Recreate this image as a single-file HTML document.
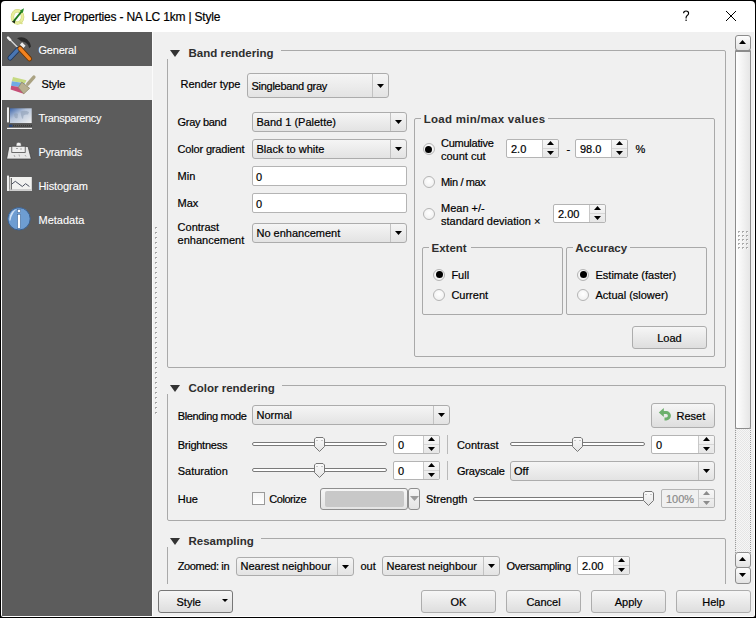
<!DOCTYPE html><html><head><meta charset="utf-8"><style>
html,body{margin:0;padding:0;}
body{width:756px;height:618px;overflow:hidden;background:#000;position:relative;font-family:"Liberation Sans",sans-serif;}
.t{position:absolute;white-space:nowrap;font-size:11px;line-height:13px;color:#000;-webkit-text-stroke:0.2px currentColor;}
</style></head><body>
<div style="position:absolute;left:1px;top:1px;width:754px;height:616px;box-sizing:border-box;background:#fff;border-radius:4px 4px 2px 2px;"></div>
<div style="position:absolute;left:152px;top:32px;width:602px;height:584px;box-sizing:border-box;background:#f0f0f0;"></div>
<div style="position:absolute;left:152px;top:32px;width:1px;height:584px;box-sizing:border-box;background:#fbfbfb;"></div>
<div style="position:absolute;left:2px;top:32px;width:150px;height:584px;box-sizing:border-box;background:#5c5c5c;"></div>
<div style="position:absolute;left:2px;top:66px;width:150px;height:34px;box-sizing:border-box;background:#f0f0f0;"></div>
<div class="t" style="left:31.5px;top:11px;font-size:12px;letter-spacing:-0.2px;">Layer Properties - NA LC 1km | Style</div>
<svg style="position:absolute;left:682px;top:10px" width="9" height="12" viewBox="0 0 9 12"><path d="M1.6 3.2 Q1.6 1 4 1 Q6.6 1 6.6 3.2 Q6.6 4.6 5.2 5.5 Q4.1 6.3 4.1 7.6 V8.4" stroke="#000" stroke-width="1.15" fill="none"/><rect x="3.45" y="9.6" width="1.3" height="1.3" fill="#000"/></svg>
<svg style="position:absolute;left:725px;top:10px" width="12" height="12"><path d="M1 1 L11 11 M11 1 L1 11" stroke="#000" stroke-width="1"/></svg>
<div class="t" style="left:38.5px;top:44px;font-size:11px;color:#ffffff;letter-spacing:-0.2px;-webkit-text-stroke:0.1px #fff;">General</div>
<div class="t" style="left:41.4px;top:78px;font-size:11px;letter-spacing:-0.1px;">Style</div>
<div class="t" style="left:38.5px;top:112px;font-size:11px;color:#ffffff;letter-spacing:-0.35px;-webkit-text-stroke:0.1px #fff;">Transparency</div>
<div class="t" style="left:38.5px;top:146px;font-size:11px;color:#ffffff;letter-spacing:-0.3px;-webkit-text-stroke:0.1px #fff;">Pyramids</div>
<div class="t" style="left:38.5px;top:180px;font-size:11px;color:#ffffff;letter-spacing:-0.1px;-webkit-text-stroke:0.1px #fff;">Histogram</div>
<div class="t" style="left:38.5px;top:214px;font-size:11px;color:#ffffff;-webkit-text-stroke:0.1px #fff;">Metadata</div>
<div style="position:absolute;left:155px;top:227px;width:2px;height:1px;box-sizing:border-box;background:#a0a0a0;"></div>
<div style="position:absolute;left:155px;top:228px;width:1px;height:1px;box-sizing:border-box;background:#b8b8b8;"></div>
<div style="position:absolute;left:156px;top:228px;width:1px;height:1px;box-sizing:border-box;background:#ffffff;"></div>
<div style="position:absolute;left:155px;top:232px;width:2px;height:1px;box-sizing:border-box;background:#a0a0a0;"></div>
<div style="position:absolute;left:155px;top:233px;width:1px;height:1px;box-sizing:border-box;background:#b8b8b8;"></div>
<div style="position:absolute;left:156px;top:233px;width:1px;height:1px;box-sizing:border-box;background:#ffffff;"></div>
<div style="position:absolute;left:155px;top:237px;width:2px;height:1px;box-sizing:border-box;background:#a0a0a0;"></div>
<div style="position:absolute;left:155px;top:238px;width:1px;height:1px;box-sizing:border-box;background:#b8b8b8;"></div>
<div style="position:absolute;left:156px;top:238px;width:1px;height:1px;box-sizing:border-box;background:#ffffff;"></div>
<div style="position:absolute;left:155px;top:242px;width:2px;height:1px;box-sizing:border-box;background:#a0a0a0;"></div>
<div style="position:absolute;left:155px;top:243px;width:1px;height:1px;box-sizing:border-box;background:#b8b8b8;"></div>
<div style="position:absolute;left:156px;top:243px;width:1px;height:1px;box-sizing:border-box;background:#ffffff;"></div>
<div style="position:absolute;left:155px;top:247px;width:2px;height:1px;box-sizing:border-box;background:#a0a0a0;"></div>
<div style="position:absolute;left:155px;top:248px;width:1px;height:1px;box-sizing:border-box;background:#b8b8b8;"></div>
<div style="position:absolute;left:156px;top:248px;width:1px;height:1px;box-sizing:border-box;background:#ffffff;"></div>
<div style="position:absolute;left:155px;top:252px;width:2px;height:1px;box-sizing:border-box;background:#a0a0a0;"></div>
<div style="position:absolute;left:155px;top:253px;width:1px;height:1px;box-sizing:border-box;background:#b8b8b8;"></div>
<div style="position:absolute;left:156px;top:253px;width:1px;height:1px;box-sizing:border-box;background:#ffffff;"></div>
<div style="position:absolute;left:155px;top:257px;width:2px;height:1px;box-sizing:border-box;background:#a0a0a0;"></div>
<div style="position:absolute;left:155px;top:258px;width:1px;height:1px;box-sizing:border-box;background:#b8b8b8;"></div>
<div style="position:absolute;left:156px;top:258px;width:1px;height:1px;box-sizing:border-box;background:#ffffff;"></div>
<div style="position:absolute;left:155px;top:262px;width:2px;height:1px;box-sizing:border-box;background:#a0a0a0;"></div>
<div style="position:absolute;left:155px;top:263px;width:1px;height:1px;box-sizing:border-box;background:#b8b8b8;"></div>
<div style="position:absolute;left:156px;top:263px;width:1px;height:1px;box-sizing:border-box;background:#ffffff;"></div>
<div style="position:absolute;left:155px;top:267px;width:2px;height:1px;box-sizing:border-box;background:#a0a0a0;"></div>
<div style="position:absolute;left:155px;top:268px;width:1px;height:1px;box-sizing:border-box;background:#b8b8b8;"></div>
<div style="position:absolute;left:156px;top:268px;width:1px;height:1px;box-sizing:border-box;background:#ffffff;"></div>
<div style="position:absolute;left:155px;top:272px;width:2px;height:1px;box-sizing:border-box;background:#a0a0a0;"></div>
<div style="position:absolute;left:155px;top:273px;width:1px;height:1px;box-sizing:border-box;background:#b8b8b8;"></div>
<div style="position:absolute;left:156px;top:273px;width:1px;height:1px;box-sizing:border-box;background:#ffffff;"></div>
<div style="position:absolute;left:155px;top:277px;width:2px;height:1px;box-sizing:border-box;background:#a0a0a0;"></div>
<div style="position:absolute;left:155px;top:278px;width:1px;height:1px;box-sizing:border-box;background:#b8b8b8;"></div>
<div style="position:absolute;left:156px;top:278px;width:1px;height:1px;box-sizing:border-box;background:#ffffff;"></div>
<div style="position:absolute;left:155px;top:282px;width:2px;height:1px;box-sizing:border-box;background:#a0a0a0;"></div>
<div style="position:absolute;left:155px;top:283px;width:1px;height:1px;box-sizing:border-box;background:#b8b8b8;"></div>
<div style="position:absolute;left:156px;top:283px;width:1px;height:1px;box-sizing:border-box;background:#ffffff;"></div>
<div style="position:absolute;left:155px;top:287px;width:2px;height:1px;box-sizing:border-box;background:#a0a0a0;"></div>
<div style="position:absolute;left:155px;top:288px;width:1px;height:1px;box-sizing:border-box;background:#b8b8b8;"></div>
<div style="position:absolute;left:156px;top:288px;width:1px;height:1px;box-sizing:border-box;background:#ffffff;"></div>
<div style="position:absolute;left:155px;top:292px;width:2px;height:1px;box-sizing:border-box;background:#a0a0a0;"></div>
<div style="position:absolute;left:155px;top:293px;width:1px;height:1px;box-sizing:border-box;background:#b8b8b8;"></div>
<div style="position:absolute;left:156px;top:293px;width:1px;height:1px;box-sizing:border-box;background:#ffffff;"></div>
<div style="position:absolute;left:155px;top:297px;width:2px;height:1px;box-sizing:border-box;background:#a0a0a0;"></div>
<div style="position:absolute;left:155px;top:298px;width:1px;height:1px;box-sizing:border-box;background:#b8b8b8;"></div>
<div style="position:absolute;left:156px;top:298px;width:1px;height:1px;box-sizing:border-box;background:#ffffff;"></div>
<div style="position:absolute;left:155px;top:302px;width:2px;height:1px;box-sizing:border-box;background:#a0a0a0;"></div>
<div style="position:absolute;left:155px;top:303px;width:1px;height:1px;box-sizing:border-box;background:#b8b8b8;"></div>
<div style="position:absolute;left:156px;top:303px;width:1px;height:1px;box-sizing:border-box;background:#ffffff;"></div>
<div style="position:absolute;left:155px;top:307px;width:2px;height:1px;box-sizing:border-box;background:#a0a0a0;"></div>
<div style="position:absolute;left:155px;top:308px;width:1px;height:1px;box-sizing:border-box;background:#b8b8b8;"></div>
<div style="position:absolute;left:156px;top:308px;width:1px;height:1px;box-sizing:border-box;background:#ffffff;"></div>
<div style="position:absolute;left:155px;top:312px;width:2px;height:1px;box-sizing:border-box;background:#a0a0a0;"></div>
<div style="position:absolute;left:155px;top:313px;width:1px;height:1px;box-sizing:border-box;background:#b8b8b8;"></div>
<div style="position:absolute;left:156px;top:313px;width:1px;height:1px;box-sizing:border-box;background:#ffffff;"></div>
<div style="position:absolute;left:155px;top:317px;width:2px;height:1px;box-sizing:border-box;background:#a0a0a0;"></div>
<div style="position:absolute;left:155px;top:318px;width:1px;height:1px;box-sizing:border-box;background:#b8b8b8;"></div>
<div style="position:absolute;left:156px;top:318px;width:1px;height:1px;box-sizing:border-box;background:#ffffff;"></div>
<div style="position:absolute;left:155px;top:322px;width:2px;height:1px;box-sizing:border-box;background:#a0a0a0;"></div>
<div style="position:absolute;left:155px;top:323px;width:1px;height:1px;box-sizing:border-box;background:#b8b8b8;"></div>
<div style="position:absolute;left:156px;top:323px;width:1px;height:1px;box-sizing:border-box;background:#ffffff;"></div>
<div style="position:absolute;left:155px;top:327px;width:2px;height:1px;box-sizing:border-box;background:#a0a0a0;"></div>
<div style="position:absolute;left:155px;top:328px;width:1px;height:1px;box-sizing:border-box;background:#b8b8b8;"></div>
<div style="position:absolute;left:156px;top:328px;width:1px;height:1px;box-sizing:border-box;background:#ffffff;"></div>
<div style="position:absolute;left:155px;top:332px;width:2px;height:1px;box-sizing:border-box;background:#a0a0a0;"></div>
<div style="position:absolute;left:155px;top:333px;width:1px;height:1px;box-sizing:border-box;background:#b8b8b8;"></div>
<div style="position:absolute;left:156px;top:333px;width:1px;height:1px;box-sizing:border-box;background:#ffffff;"></div>
<div style="position:absolute;left:155px;top:337px;width:2px;height:1px;box-sizing:border-box;background:#a0a0a0;"></div>
<div style="position:absolute;left:155px;top:338px;width:1px;height:1px;box-sizing:border-box;background:#b8b8b8;"></div>
<div style="position:absolute;left:156px;top:338px;width:1px;height:1px;box-sizing:border-box;background:#ffffff;"></div>
<div style="position:absolute;left:155px;top:342px;width:2px;height:1px;box-sizing:border-box;background:#a0a0a0;"></div>
<div style="position:absolute;left:155px;top:343px;width:1px;height:1px;box-sizing:border-box;background:#b8b8b8;"></div>
<div style="position:absolute;left:156px;top:343px;width:1px;height:1px;box-sizing:border-box;background:#ffffff;"></div>
<div style="position:absolute;left:155px;top:347px;width:2px;height:1px;box-sizing:border-box;background:#a0a0a0;"></div>
<div style="position:absolute;left:155px;top:348px;width:1px;height:1px;box-sizing:border-box;background:#b8b8b8;"></div>
<div style="position:absolute;left:156px;top:348px;width:1px;height:1px;box-sizing:border-box;background:#ffffff;"></div>
<div style="position:absolute;left:155px;top:352px;width:2px;height:1px;box-sizing:border-box;background:#a0a0a0;"></div>
<div style="position:absolute;left:155px;top:353px;width:1px;height:1px;box-sizing:border-box;background:#b8b8b8;"></div>
<div style="position:absolute;left:156px;top:353px;width:1px;height:1px;box-sizing:border-box;background:#ffffff;"></div>
<div style="position:absolute;left:155px;top:357px;width:2px;height:1px;box-sizing:border-box;background:#a0a0a0;"></div>
<div style="position:absolute;left:155px;top:358px;width:1px;height:1px;box-sizing:border-box;background:#b8b8b8;"></div>
<div style="position:absolute;left:156px;top:358px;width:1px;height:1px;box-sizing:border-box;background:#ffffff;"></div>
<div style="position:absolute;left:155px;top:362px;width:2px;height:1px;box-sizing:border-box;background:#a0a0a0;"></div>
<div style="position:absolute;left:155px;top:363px;width:1px;height:1px;box-sizing:border-box;background:#b8b8b8;"></div>
<div style="position:absolute;left:156px;top:363px;width:1px;height:1px;box-sizing:border-box;background:#ffffff;"></div>
<div style="position:absolute;left:155px;top:367px;width:2px;height:1px;box-sizing:border-box;background:#a0a0a0;"></div>
<div style="position:absolute;left:155px;top:368px;width:1px;height:1px;box-sizing:border-box;background:#b8b8b8;"></div>
<div style="position:absolute;left:156px;top:368px;width:1px;height:1px;box-sizing:border-box;background:#ffffff;"></div>
<div style="position:absolute;left:155px;top:372px;width:2px;height:1px;box-sizing:border-box;background:#a0a0a0;"></div>
<div style="position:absolute;left:155px;top:373px;width:1px;height:1px;box-sizing:border-box;background:#b8b8b8;"></div>
<div style="position:absolute;left:156px;top:373px;width:1px;height:1px;box-sizing:border-box;background:#ffffff;"></div>
<div style="position:absolute;left:155px;top:377px;width:2px;height:1px;box-sizing:border-box;background:#a0a0a0;"></div>
<div style="position:absolute;left:155px;top:378px;width:1px;height:1px;box-sizing:border-box;background:#b8b8b8;"></div>
<div style="position:absolute;left:156px;top:378px;width:1px;height:1px;box-sizing:border-box;background:#ffffff;"></div>
<div style="position:absolute;left:155px;top:382px;width:2px;height:1px;box-sizing:border-box;background:#a0a0a0;"></div>
<div style="position:absolute;left:155px;top:383px;width:1px;height:1px;box-sizing:border-box;background:#b8b8b8;"></div>
<div style="position:absolute;left:156px;top:383px;width:1px;height:1px;box-sizing:border-box;background:#ffffff;"></div>
<div style="position:absolute;left:155px;top:387px;width:2px;height:1px;box-sizing:border-box;background:#a0a0a0;"></div>
<div style="position:absolute;left:155px;top:388px;width:1px;height:1px;box-sizing:border-box;background:#b8b8b8;"></div>
<div style="position:absolute;left:156px;top:388px;width:1px;height:1px;box-sizing:border-box;background:#ffffff;"></div>
<div style="position:absolute;left:155px;top:392px;width:2px;height:1px;box-sizing:border-box;background:#a0a0a0;"></div>
<div style="position:absolute;left:155px;top:393px;width:1px;height:1px;box-sizing:border-box;background:#b8b8b8;"></div>
<div style="position:absolute;left:156px;top:393px;width:1px;height:1px;box-sizing:border-box;background:#ffffff;"></div>
<div style="position:absolute;left:155px;top:397px;width:2px;height:1px;box-sizing:border-box;background:#a0a0a0;"></div>
<div style="position:absolute;left:155px;top:398px;width:1px;height:1px;box-sizing:border-box;background:#b8b8b8;"></div>
<div style="position:absolute;left:156px;top:398px;width:1px;height:1px;box-sizing:border-box;background:#ffffff;"></div>
<div style="position:absolute;left:155px;top:402px;width:2px;height:1px;box-sizing:border-box;background:#a0a0a0;"></div>
<div style="position:absolute;left:155px;top:403px;width:1px;height:1px;box-sizing:border-box;background:#b8b8b8;"></div>
<div style="position:absolute;left:156px;top:403px;width:1px;height:1px;box-sizing:border-box;background:#ffffff;"></div>
<div style="position:absolute;left:155px;top:407px;width:2px;height:1px;box-sizing:border-box;background:#a0a0a0;"></div>
<div style="position:absolute;left:155px;top:408px;width:1px;height:1px;box-sizing:border-box;background:#b8b8b8;"></div>
<div style="position:absolute;left:156px;top:408px;width:1px;height:1px;box-sizing:border-box;background:#ffffff;"></div>
<div style="position:absolute;left:155px;top:412px;width:2px;height:1px;box-sizing:border-box;background:#a0a0a0;"></div>
<div style="position:absolute;left:155px;top:413px;width:1px;height:1px;box-sizing:border-box;background:#b8b8b8;"></div>
<div style="position:absolute;left:156px;top:413px;width:1px;height:1px;box-sizing:border-box;background:#ffffff;"></div>
<div style="position:absolute;left:167px;top:50px;width:559px;height:318px;box-sizing:border-box;border:1px solid #a9a9a9;border-radius:2px;"></div><div style="position:absolute;left:166px;top:49px;width:115px;height:10px;box-sizing:border-box;background:#f0f0f0;"></div><div style="position:absolute;left:170px;top:50px;width:0;height:0;border-left:5px solid transparent;border-right:5px solid transparent;border-top:7px solid #333;"></div><div class="t" style="left:188.5px;top:47px;font-size:11.5px;font-weight:700;-webkit-text-stroke:0;color:#2e2e2e;">Band rendering</div>
<div class="t" style="left:180.5px;top:78px;font-size:11px;">Render type</div>
<div style="position:absolute;left:247px;top:73px;width:142px;height:25px;box-sizing:border-box;border:1px solid #acacac;border-radius:3px;background:linear-gradient(#f5f5f5,#e3e3e3);"></div><div style="position:absolute;left:372px;top:74px;width:1px;height:23px;box-sizing:border-box;background:#c2c2c2;"></div><svg style="position:absolute;left:377px;top:84px" width="7" height="4"><path d="M0 0 H7 L3.5 4 Z" fill="#000"/></svg>
<div class="t" style="left:251.5px;top:80px;font-size:11px;letter-spacing:-0.27px;">Singleband gray</div>
<div class="t" style="left:177.6px;top:116px;font-size:11px;letter-spacing:-0.3px;">Gray band</div>
<div style="position:absolute;left:252px;top:112px;width:155px;height:20px;box-sizing:border-box;border:1px solid #acacac;border-radius:3px;background:linear-gradient(#f5f5f5,#e3e3e3);"></div><div style="position:absolute;left:390px;top:113px;width:1px;height:18px;box-sizing:border-box;background:#c2c2c2;"></div><svg style="position:absolute;left:395px;top:120px" width="7" height="4"><path d="M0 0 H7 L3.5 4 Z" fill="#000"/></svg><div class="t" style="left:256.5px;top:116px;font-size:11px;">Band 1 (Palette)</div>
<div class="t" style="left:177.6px;top:143px;font-size:11px;letter-spacing:-0.17px;">Color gradient</div>
<div style="position:absolute;left:252px;top:139px;width:155px;height:20px;box-sizing:border-box;border:1px solid #acacac;border-radius:3px;background:linear-gradient(#f5f5f5,#e3e3e3);"></div><div style="position:absolute;left:390px;top:140px;width:1px;height:18px;box-sizing:border-box;background:#c2c2c2;"></div><svg style="position:absolute;left:395px;top:147px" width="7" height="4"><path d="M0 0 H7 L3.5 4 Z" fill="#000"/></svg><div class="t" style="left:256.5px;top:143px;font-size:11px;">Black to white</div>
<div class="t" style="left:177.6px;top:170px;font-size:11px;">Min</div>
<div style="position:absolute;left:252px;top:166px;width:155px;height:20px;box-sizing:border-box;border:1px solid #b4b4b4;border-radius:2px;background:#fff;"></div><div class="t" style="left:256px;top:171px;font-size:11px;">0</div>
<div class="t" style="left:177.6px;top:197px;font-size:11px;">Max</div>
<div style="position:absolute;left:252px;top:193px;width:155px;height:20px;box-sizing:border-box;border:1px solid #b4b4b4;border-radius:2px;background:#fff;"></div><div class="t" style="left:256px;top:198px;font-size:11px;">0</div>
<div class="t" style="left:177.6px;top:221px;font-size:11px;">Contrast</div>
<div class="t" style="left:177.6px;top:234px;font-size:11px;">enhancement</div>
<div style="position:absolute;left:252px;top:223px;width:155px;height:20px;box-sizing:border-box;border:1px solid #acacac;border-radius:3px;background:linear-gradient(#f5f5f5,#e3e3e3);"></div><div style="position:absolute;left:390px;top:224px;width:1px;height:18px;box-sizing:border-box;background:#c2c2c2;"></div><svg style="position:absolute;left:395px;top:231px" width="7" height="4"><path d="M0 0 H7 L3.5 4 Z" fill="#000"/></svg><div class="t" style="left:256.5px;top:227px;font-size:11px;">No enhancement</div>
<div style="position:absolute;left:414px;top:118px;width:301px;height:239px;box-sizing:border-box;border:1px solid #a9a9a9;border-radius:2px;"></div><div style="position:absolute;left:421px;top:117px;width:127px;height:5px;box-sizing:border-box;background:#f0f0f0;"></div>
<div class="t" style="left:423.7px;top:113px;font-size:11.5px;font-weight:700;-webkit-text-stroke:0;color:#2e2e2e;letter-spacing:0.28px;">Load min/max values</div>
<div style="position:absolute;left:422.6px;top:143.3px;width:12px;height:12px;box-sizing:border-box;border:1px solid #b4b4b4;border-radius:50%;background:radial-gradient(circle at 50% 40%,#ffffff,#ececec);"></div><div style="position:absolute;left:425.1px;top:145.8px;width:7px;height:7px;border-radius:50%;background:#000;"></div>
<div class="t" style="left:441px;top:137px;font-size:11px;letter-spacing:-0.25px;">Cumulative</div>
<div class="t" style="left:441px;top:150px;font-size:11px;">count cut</div>
<div style="position:absolute;left:506px;top:139px;width:53px;height:19px;box-sizing:border-box;border:1px solid #b4b4b4;border-radius:2px;background:#fff;"></div><div style="position:absolute;left:542px;top:140px;width:16px;height:17px;box-sizing:border-box;background:linear-gradient(#f7f7f7,#e6e6e6);border-radius:0 2px 2px 0;"></div><div style="position:absolute;left:542px;top:140px;width:1px;height:17px;box-sizing:border-box;background:#c8c8c8;"></div><div style="position:absolute;left:543px;top:148px;width:15px;height:1px;box-sizing:border-box;background:#d6d6d6;"></div><svg style="position:absolute;left:547px;top:141px" width="7" height="4"><path d="M0 4 H7 L3.5 0 Z" fill="#000"/></svg><svg style="position:absolute;left:547px;top:151px" width="7" height="4"><path d="M0 0 H7 L3.5 4 Z" fill="#000"/></svg><div class="t" style="left:511px;top:143px;font-size:11px;">2.0</div>
<div class="t" style="left:566.5px;top:143px;font-size:11px;">-</div>
<div style="position:absolute;left:575px;top:139px;width:53px;height:19px;box-sizing:border-box;border:1px solid #b4b4b4;border-radius:2px;background:#fff;"></div><div style="position:absolute;left:611px;top:140px;width:16px;height:17px;box-sizing:border-box;background:linear-gradient(#f7f7f7,#e6e6e6);border-radius:0 2px 2px 0;"></div><div style="position:absolute;left:611px;top:140px;width:1px;height:17px;box-sizing:border-box;background:#c8c8c8;"></div><div style="position:absolute;left:612px;top:148px;width:15px;height:1px;box-sizing:border-box;background:#d6d6d6;"></div><svg style="position:absolute;left:616px;top:141px" width="7" height="4"><path d="M0 4 H7 L3.5 0 Z" fill="#000"/></svg><svg style="position:absolute;left:616px;top:151px" width="7" height="4"><path d="M0 0 H7 L3.5 4 Z" fill="#000"/></svg><div class="t" style="left:580px;top:143px;font-size:11px;">98.0</div>
<div class="t" style="left:635.5px;top:143px;font-size:11px;">%</div>
<div style="position:absolute;left:422.6px;top:175.5px;width:12px;height:12px;box-sizing:border-box;border:1px solid #b4b4b4;border-radius:50%;background:radial-gradient(circle at 50% 40%,#ffffff,#ececec);"></div>
<div class="t" style="left:441px;top:176px;font-size:11px;letter-spacing:-0.35px;">Min / max</div>
<div style="position:absolute;left:422.6px;top:208px;width:12px;height:12px;box-sizing:border-box;border:1px solid #b4b4b4;border-radius:50%;background:radial-gradient(circle at 50% 40%,#ffffff,#ececec);"></div>
<div class="t" style="left:441px;top:202px;font-size:11px;">Mean +/-</div>
<div class="t" style="left:441px;top:215px;font-size:11px;">standard deviation ×</div>
<div style="position:absolute;left:553px;top:204px;width:53px;height:19px;box-sizing:border-box;border:1px solid #b4b4b4;border-radius:2px;background:#fff;"></div><div style="position:absolute;left:589px;top:205px;width:16px;height:17px;box-sizing:border-box;background:linear-gradient(#f7f7f7,#e6e6e6);border-radius:0 2px 2px 0;"></div><div style="position:absolute;left:589px;top:205px;width:1px;height:17px;box-sizing:border-box;background:#c8c8c8;"></div><div style="position:absolute;left:590px;top:213px;width:15px;height:1px;box-sizing:border-box;background:#d6d6d6;"></div><svg style="position:absolute;left:594px;top:206px" width="7" height="4"><path d="M0 4 H7 L3.5 0 Z" fill="#000"/></svg><svg style="position:absolute;left:594px;top:216px" width="7" height="4"><path d="M0 0 H7 L3.5 4 Z" fill="#000"/></svg><div class="t" style="left:558px;top:208px;font-size:11px;">2.00</div>
<div style="position:absolute;left:422px;top:247px;width:141px;height:68px;box-sizing:border-box;border:1px solid #a9a9a9;border-radius:2px;"></div><div style="position:absolute;left:429px;top:246px;width:42px;height:5px;box-sizing:border-box;background:#f0f0f0;"></div>
<div class="t" style="left:431.5px;top:242px;font-size:11.5px;font-weight:700;-webkit-text-stroke:0;color:#2e2e2e;">Extent</div>
<div style="position:absolute;left:433.3px;top:268.8px;width:12px;height:12px;box-sizing:border-box;border:1px solid #b4b4b4;border-radius:50%;background:radial-gradient(circle at 50% 40%,#ffffff,#ececec);"></div><div style="position:absolute;left:435.8px;top:271.3px;width:7px;height:7px;border-radius:50%;background:#000;"></div>
<div class="t" style="left:451.4px;top:269px;font-size:11px;">Full</div>
<div style="position:absolute;left:433.3px;top:288.5px;width:12px;height:12px;box-sizing:border-box;border:1px solid #b4b4b4;border-radius:50%;background:radial-gradient(circle at 50% 40%,#ffffff,#ececec);"></div>
<div class="t" style="left:451.4px;top:289px;font-size:11px;">Current</div>
<div style="position:absolute;left:566px;top:247px;width:141px;height:68px;box-sizing:border-box;border:1px solid #a9a9a9;border-radius:2px;"></div><div style="position:absolute;left:573px;top:246px;width:57px;height:5px;box-sizing:border-box;background:#f0f0f0;"></div>
<div class="t" style="left:575.3px;top:242px;font-size:11.5px;font-weight:700;-webkit-text-stroke:0;color:#2e2e2e;">Accuracy</div>
<div style="position:absolute;left:577.2px;top:268.8px;width:12px;height:12px;box-sizing:border-box;border:1px solid #b4b4b4;border-radius:50%;background:radial-gradient(circle at 50% 40%,#ffffff,#ececec);"></div><div style="position:absolute;left:579.7px;top:271.3px;width:7px;height:7px;border-radius:50%;background:#000;"></div>
<div class="t" style="left:595.5px;top:269px;font-size:11px;">Estimate (faster)</div>
<div style="position:absolute;left:577.2px;top:288.5px;width:12px;height:12px;box-sizing:border-box;border:1px solid #b4b4b4;border-radius:50%;background:radial-gradient(circle at 50% 40%,#ffffff,#ececec);"></div>
<div class="t" style="left:595.5px;top:289px;font-size:11px;">Actual (slower)</div>
<div style="position:absolute;left:632px;top:326px;width:75px;height:23px;box-sizing:border-box;border:1px solid #adadad;border-radius:3px;background:linear-gradient(#f6f6f6,#dedede);"></div><div class="t" style="left:632px;width:75px;text-align:center;top:332px;">Load</div>
<div style="position:absolute;left:167px;top:385px;width:559px;height:136px;box-sizing:border-box;border:1px solid #a9a9a9;border-radius:2px;"></div><div style="position:absolute;left:166px;top:384px;width:116px;height:10px;box-sizing:border-box;background:#f0f0f0;"></div><div style="position:absolute;left:170px;top:385px;width:0;height:0;border-left:5px solid transparent;border-right:5px solid transparent;border-top:7px solid #333;"></div><div class="t" style="left:188.5px;top:382px;font-size:11.5px;font-weight:700;-webkit-text-stroke:0;color:#2e2e2e;">Color rendering</div>
<div class="t" style="left:177.7px;top:410px;font-size:11px;letter-spacing:-0.35px;">Blending mode</div>
<div style="position:absolute;left:252px;top:405px;width:198px;height:20px;box-sizing:border-box;border:1px solid #acacac;border-radius:3px;background:linear-gradient(#f5f5f5,#e3e3e3);"></div><div style="position:absolute;left:433px;top:406px;width:1px;height:18px;box-sizing:border-box;background:#c2c2c2;"></div><svg style="position:absolute;left:438px;top:413px" width="7" height="4"><path d="M0 0 H7 L3.5 4 Z" fill="#000"/></svg><div class="t" style="left:256.5px;top:409px;font-size:11px;">Normal</div>
<div style="position:absolute;left:651px;top:403px;width:64px;height:25px;box-sizing:border-box;border:1px solid #adadad;border-radius:3px;background:linear-gradient(#f6f6f6,#dedede);"></div>
<div class="t" style="left:676.5px;top:410px;font-size:11px;">Reset</div>
<div class="t" style="left:177.7px;top:439px;font-size:11px;letter-spacing:-0.25px;">Brightness</div>
<div style="position:absolute;left:252px;top:442px;width:135px;height:4px;box-sizing:border-box;border:1px solid #7a7a7a;border-radius:2px;background:#fff;"></div><svg style="position:absolute;left:314px;top:437px" width="11" height="15" viewBox="0 0 11 15"><defs><linearGradient id="hg" x1="0" y1="0" x2="0" y2="1"><stop offset="0" stop-color="#fbfbfb"/><stop offset="1" stop-color="#e4e4e4"/></linearGradient></defs><path d="M2 0.5 H9 L10.5 2 V9.5 L5.5 14.5 L0.5 9.5 V2 Z" fill="url(#hg)" stroke="#777" stroke-width="1"/><rect x="2.5" y="3" width="1" height="1" fill="#999"/><rect x="7.5" y="3" width="1" height="1" fill="#999"/></svg>
<div style="position:absolute;left:393px;top:435px;width:47px;height:19px;box-sizing:border-box;border:1px solid #b4b4b4;border-radius:2px;background:#fff;"></div><div style="position:absolute;left:423px;top:436px;width:16px;height:17px;box-sizing:border-box;background:linear-gradient(#f7f7f7,#e6e6e6);border-radius:0 2px 2px 0;"></div><div style="position:absolute;left:423px;top:436px;width:1px;height:17px;box-sizing:border-box;background:#c8c8c8;"></div><div style="position:absolute;left:424px;top:444px;width:15px;height:1px;box-sizing:border-box;background:#d6d6d6;"></div><svg style="position:absolute;left:428px;top:437px" width="7" height="4"><path d="M0 4 H7 L3.5 0 Z" fill="#000"/></svg><svg style="position:absolute;left:428px;top:447px" width="7" height="4"><path d="M0 0 H7 L3.5 4 Z" fill="#000"/></svg><div class="t" style="left:398px;top:439px;font-size:11px;">0</div>
<div style="position:absolute;left:447px;top:435px;width:1px;height:19px;box-sizing:border-box;background:#b9b9b9;"></div>
<div class="t" style="left:456.9px;top:439px;font-size:11px;">Contrast</div>
<div style="position:absolute;left:510px;top:442px;width:135px;height:4px;box-sizing:border-box;border:1px solid #7a7a7a;border-radius:2px;background:#fff;"></div><svg style="position:absolute;left:572px;top:437px" width="11" height="15" viewBox="0 0 11 15"><defs><linearGradient id="hg" x1="0" y1="0" x2="0" y2="1"><stop offset="0" stop-color="#fbfbfb"/><stop offset="1" stop-color="#e4e4e4"/></linearGradient></defs><path d="M2 0.5 H9 L10.5 2 V9.5 L5.5 14.5 L0.5 9.5 V2 Z" fill="url(#hg)" stroke="#777" stroke-width="1"/><rect x="2.5" y="3" width="1" height="1" fill="#999"/><rect x="7.5" y="3" width="1" height="1" fill="#999"/></svg>
<div style="position:absolute;left:651px;top:435px;width:64px;height:19px;box-sizing:border-box;border:1px solid #b4b4b4;border-radius:2px;background:#fff;"></div><div style="position:absolute;left:698px;top:436px;width:16px;height:17px;box-sizing:border-box;background:linear-gradient(#f7f7f7,#e6e6e6);border-radius:0 2px 2px 0;"></div><div style="position:absolute;left:698px;top:436px;width:1px;height:17px;box-sizing:border-box;background:#c8c8c8;"></div><div style="position:absolute;left:699px;top:444px;width:15px;height:1px;box-sizing:border-box;background:#d6d6d6;"></div><svg style="position:absolute;left:703px;top:437px" width="7" height="4"><path d="M0 4 H7 L3.5 0 Z" fill="#000"/></svg><svg style="position:absolute;left:703px;top:447px" width="7" height="4"><path d="M0 0 H7 L3.5 4 Z" fill="#000"/></svg><div class="t" style="left:656px;top:439px;font-size:11px;">0</div>
<div class="t" style="left:177.7px;top:465px;font-size:11px;">Saturation</div>
<div style="position:absolute;left:252px;top:468px;width:135px;height:4px;box-sizing:border-box;border:1px solid #7a7a7a;border-radius:2px;background:#fff;"></div><svg style="position:absolute;left:314px;top:463px" width="11" height="15" viewBox="0 0 11 15"><defs><linearGradient id="hg" x1="0" y1="0" x2="0" y2="1"><stop offset="0" stop-color="#fbfbfb"/><stop offset="1" stop-color="#e4e4e4"/></linearGradient></defs><path d="M2 0.5 H9 L10.5 2 V9.5 L5.5 14.5 L0.5 9.5 V2 Z" fill="url(#hg)" stroke="#777" stroke-width="1"/><rect x="2.5" y="3" width="1" height="1" fill="#999"/><rect x="7.5" y="3" width="1" height="1" fill="#999"/></svg>
<div style="position:absolute;left:393px;top:461px;width:47px;height:19px;box-sizing:border-box;border:1px solid #b4b4b4;border-radius:2px;background:#fff;"></div><div style="position:absolute;left:423px;top:462px;width:16px;height:17px;box-sizing:border-box;background:linear-gradient(#f7f7f7,#e6e6e6);border-radius:0 2px 2px 0;"></div><div style="position:absolute;left:423px;top:462px;width:1px;height:17px;box-sizing:border-box;background:#c8c8c8;"></div><div style="position:absolute;left:424px;top:470px;width:15px;height:1px;box-sizing:border-box;background:#d6d6d6;"></div><svg style="position:absolute;left:428px;top:463px" width="7" height="4"><path d="M0 4 H7 L3.5 0 Z" fill="#000"/></svg><svg style="position:absolute;left:428px;top:473px" width="7" height="4"><path d="M0 0 H7 L3.5 4 Z" fill="#000"/></svg><div class="t" style="left:398px;top:465px;font-size:11px;">0</div>
<div style="position:absolute;left:447px;top:461px;width:1px;height:19px;box-sizing:border-box;background:#b9b9b9;"></div>
<div class="t" style="left:456.9px;top:465px;font-size:11px;letter-spacing:-0.2px;">Grayscale</div>
<div style="position:absolute;left:510px;top:461px;width:205px;height:20px;box-sizing:border-box;border:1px solid #acacac;border-radius:3px;background:linear-gradient(#f5f5f5,#e3e3e3);"></div><div style="position:absolute;left:698px;top:462px;width:1px;height:18px;box-sizing:border-box;background:#c2c2c2;"></div><svg style="position:absolute;left:703px;top:469px" width="7" height="4"><path d="M0 0 H7 L3.5 4 Z" fill="#000"/></svg><div class="t" style="left:514px;top:465px;font-size:11px;">Off</div>
<div class="t" style="left:177.7px;top:493px;font-size:11px;">Hue</div>
<div style="position:absolute;left:252px;top:492px;width:13px;height:13px;box-sizing:border-box;border:1px solid #9a9a9a;background:linear-gradient(#f4f4f4,#ffffff);"></div>
<div class="t" style="left:269.3px;top:493px;font-size:11px;letter-spacing:-0.45px;">Colorize</div>
<div style="position:absolute;left:320px;top:488px;width:88px;height:22px;box-sizing:border-box;border:1px solid #8e8e8e;border-radius:3px;background:linear-gradient(#f6f6f6,#e4e4e4);"></div>
<div style="position:absolute;left:325px;top:491px;width:79px;height:16px;box-sizing:border-box;background:#c8c8c8;border-radius:2px;"></div>
<div style="position:absolute;left:408px;top:488px;width:12px;height:22px;box-sizing:border-box;border:1px solid #8e8e8e;border-radius:3px;background:linear-gradient(#f6f6f6,#e4e4e4);"></div>
<svg style="position:absolute;left:410px;top:496px" width="9" height="5"><path d="M0 0 H9 L4.5 5 Z" fill="#9c9c9c"/></svg>
<div class="t" style="left:425.9px;top:493px;font-size:11px;">Strength</div>
<div style="position:absolute;left:473px;top:497px;width:181px;height:4px;box-sizing:border-box;border:1px solid #7a7a7a;border-radius:2px;background:#fff;"></div><svg style="position:absolute;left:643px;top:491px" width="11" height="15" viewBox="0 0 11 15"><defs><linearGradient id="hg" x1="0" y1="0" x2="0" y2="1"><stop offset="0" stop-color="#fbfbfb"/><stop offset="1" stop-color="#e4e4e4"/></linearGradient></defs><path d="M2 0.5 H9 L10.5 2 V9.5 L5.5 14.5 L0.5 9.5 V2 Z" fill="url(#hg)" stroke="#777" stroke-width="1"/><rect x="2.5" y="3" width="1" height="1" fill="#999"/><rect x="7.5" y="3" width="1" height="1" fill="#999"/></svg>
<div style="position:absolute;left:661px;top:489px;width:54px;height:19px;box-sizing:border-box;border:1px solid #b4b4b4;border-radius:2px;background:#f0f0f0;"></div><div style="position:absolute;left:698px;top:490px;width:16px;height:17px;box-sizing:border-box;background:linear-gradient(#f7f7f7,#e6e6e6);border-radius:0 2px 2px 0;"></div><div style="position:absolute;left:698px;top:490px;width:1px;height:17px;box-sizing:border-box;background:#c8c8c8;"></div><div style="position:absolute;left:699px;top:498px;width:15px;height:1px;box-sizing:border-box;background:#d6d6d6;"></div><svg style="position:absolute;left:703px;top:491px" width="7" height="4"><path d="M0 4 H7 L3.5 0 Z" fill="#8c8c8c"/></svg><svg style="position:absolute;left:703px;top:501px" width="7" height="4"><path d="M0 0 H7 L3.5 4 Z" fill="#8c8c8c"/></svg><div class="t" style="left:666px;top:493px;font-size:11px;color:#8a8a8a;">100%</div>
<div style="position:absolute;left:167px;top:538px;width:559px;height:63px;box-sizing:border-box;border:1px solid #a9a9a9;border-radius:2px;"></div><div style="position:absolute;left:166px;top:537px;width:95px;height:10px;box-sizing:border-box;background:#f0f0f0;"></div><div style="position:absolute;left:170px;top:538px;width:0;height:0;border-left:5px solid transparent;border-right:5px solid transparent;border-top:7px solid #333;"></div><div class="t" style="left:188.5px;top:535px;font-size:11.5px;font-weight:700;-webkit-text-stroke:0;color:#2e2e2e;">Resampling</div>
<div class="t" style="left:177.7px;top:560px;font-size:11px;letter-spacing:-0.35px;">Zoomed: in</div>
<div style="position:absolute;left:236px;top:557px;width:118px;height:19px;box-sizing:border-box;border:1px solid #acacac;border-radius:3px;background:linear-gradient(#f5f5f5,#e3e3e3);"></div><div style="position:absolute;left:337px;top:558px;width:1px;height:17px;box-sizing:border-box;background:#c2c2c2;"></div><svg style="position:absolute;left:342px;top:565px" width="7" height="4"><path d="M0 0 H7 L3.5 4 Z" fill="#000"/></svg><div class="t" style="left:240.5px;top:560px;font-size:11px;">Nearest neighbour</div>
<div class="t" style="left:360.5px;top:560px;font-size:11px;">out</div>
<div style="position:absolute;left:382px;top:556px;width:118px;height:20px;box-sizing:border-box;border:1px solid #acacac;border-radius:3px;background:linear-gradient(#f5f5f5,#e3e3e3);"></div><div style="position:absolute;left:483px;top:557px;width:1px;height:18px;box-sizing:border-box;background:#c2c2c2;"></div><svg style="position:absolute;left:488px;top:564px" width="7" height="4"><path d="M0 0 H7 L3.5 4 Z" fill="#000"/></svg><div class="t" style="left:386.5px;top:560px;font-size:11px;">Nearest neighbour</div>
<div class="t" style="left:506.5px;top:560px;font-size:11px;letter-spacing:-0.3px;">Oversampling</div>
<div style="position:absolute;left:577px;top:556px;width:53px;height:19px;box-sizing:border-box;border:1px solid #b4b4b4;border-radius:2px;background:#fff;"></div><div style="position:absolute;left:613px;top:557px;width:16px;height:17px;box-sizing:border-box;background:linear-gradient(#f7f7f7,#e6e6e6);border-radius:0 2px 2px 0;"></div><div style="position:absolute;left:613px;top:557px;width:1px;height:17px;box-sizing:border-box;background:#c8c8c8;"></div><div style="position:absolute;left:614px;top:565px;width:15px;height:1px;box-sizing:border-box;background:#d6d6d6;"></div><svg style="position:absolute;left:618px;top:558px" width="7" height="4"><path d="M0 4 H7 L3.5 0 Z" fill="#000"/></svg><svg style="position:absolute;left:618px;top:568px" width="7" height="4"><path d="M0 0 H7 L3.5 4 Z" fill="#000"/></svg><div class="t" style="left:582px;top:560px;font-size:11px;">2.00</div>
<div style="position:absolute;left:153px;top:584px;width:601px;height:32px;box-sizing:border-box;background:#f0f0f0;"></div>
<div style="position:absolute;left:735px;top:51px;width:16px;height:502px;box-sizing:border-box;background:repeating-conic-gradient(#e6e6e6 0% 25%, #f6f6f6 0% 50%) 0 0/2px 2px;border-left:1px dotted #9a9a9a;border-right:1px dotted #9a9a9a;"></div>
<div style="position:absolute;left:735px;top:35px;width:16px;height:16px;box-sizing:border-box;border:1px solid #8c8c8c;border-radius:3px;background:linear-gradient(#fdfdfd,#e2e2e2);"></div><svg style="position:absolute;left:739px;top:40px" width="7" height="4"><path d="M0 4 H7 L3.5 0 Z" fill="#000"/></svg>
<div style="position:absolute;left:735px;top:50px;width:16px;height:379px;box-sizing:border-box;border:1px solid #8c8c8c;border-radius:0 0 2px 2px;background:linear-gradient(90deg,#ffffff,#e6e6e6);"></div>
<div style="position:absolute;left:736px;top:50px;width:14px;height:2px;box-sizing:border-box;background:#8c8c8c;"></div>
<div style="position:absolute;left:738px;top:231px;width:2px;height:1px;box-sizing:border-box;background:#a8a8a8;"></div>
<div style="position:absolute;left:738px;top:232px;width:1px;height:1px;box-sizing:border-box;background:#b8b8b8;"></div>
<div style="position:absolute;left:739px;top:232px;width:1px;height:1px;box-sizing:border-box;background:#fdfdfd;"></div>
<div style="position:absolute;left:742px;top:231px;width:2px;height:1px;box-sizing:border-box;background:#a8a8a8;"></div>
<div style="position:absolute;left:742px;top:232px;width:1px;height:1px;box-sizing:border-box;background:#b8b8b8;"></div>
<div style="position:absolute;left:743px;top:232px;width:1px;height:1px;box-sizing:border-box;background:#fdfdfd;"></div>
<div style="position:absolute;left:746px;top:231px;width:2px;height:1px;box-sizing:border-box;background:#a8a8a8;"></div>
<div style="position:absolute;left:746px;top:232px;width:1px;height:1px;box-sizing:border-box;background:#b8b8b8;"></div>
<div style="position:absolute;left:747px;top:232px;width:1px;height:1px;box-sizing:border-box;background:#fdfdfd;"></div>
<div style="position:absolute;left:738px;top:235px;width:2px;height:1px;box-sizing:border-box;background:#a8a8a8;"></div>
<div style="position:absolute;left:738px;top:236px;width:1px;height:1px;box-sizing:border-box;background:#b8b8b8;"></div>
<div style="position:absolute;left:739px;top:236px;width:1px;height:1px;box-sizing:border-box;background:#fdfdfd;"></div>
<div style="position:absolute;left:742px;top:235px;width:2px;height:1px;box-sizing:border-box;background:#a8a8a8;"></div>
<div style="position:absolute;left:742px;top:236px;width:1px;height:1px;box-sizing:border-box;background:#b8b8b8;"></div>
<div style="position:absolute;left:743px;top:236px;width:1px;height:1px;box-sizing:border-box;background:#fdfdfd;"></div>
<div style="position:absolute;left:746px;top:235px;width:2px;height:1px;box-sizing:border-box;background:#a8a8a8;"></div>
<div style="position:absolute;left:746px;top:236px;width:1px;height:1px;box-sizing:border-box;background:#b8b8b8;"></div>
<div style="position:absolute;left:747px;top:236px;width:1px;height:1px;box-sizing:border-box;background:#fdfdfd;"></div>
<div style="position:absolute;left:738px;top:239px;width:2px;height:1px;box-sizing:border-box;background:#a8a8a8;"></div>
<div style="position:absolute;left:738px;top:240px;width:1px;height:1px;box-sizing:border-box;background:#b8b8b8;"></div>
<div style="position:absolute;left:739px;top:240px;width:1px;height:1px;box-sizing:border-box;background:#fdfdfd;"></div>
<div style="position:absolute;left:742px;top:239px;width:2px;height:1px;box-sizing:border-box;background:#a8a8a8;"></div>
<div style="position:absolute;left:742px;top:240px;width:1px;height:1px;box-sizing:border-box;background:#b8b8b8;"></div>
<div style="position:absolute;left:743px;top:240px;width:1px;height:1px;box-sizing:border-box;background:#fdfdfd;"></div>
<div style="position:absolute;left:746px;top:239px;width:2px;height:1px;box-sizing:border-box;background:#a8a8a8;"></div>
<div style="position:absolute;left:746px;top:240px;width:1px;height:1px;box-sizing:border-box;background:#b8b8b8;"></div>
<div style="position:absolute;left:747px;top:240px;width:1px;height:1px;box-sizing:border-box;background:#fdfdfd;"></div>
<div style="position:absolute;left:738px;top:243px;width:2px;height:1px;box-sizing:border-box;background:#a8a8a8;"></div>
<div style="position:absolute;left:738px;top:244px;width:1px;height:1px;box-sizing:border-box;background:#b8b8b8;"></div>
<div style="position:absolute;left:739px;top:244px;width:1px;height:1px;box-sizing:border-box;background:#fdfdfd;"></div>
<div style="position:absolute;left:742px;top:243px;width:2px;height:1px;box-sizing:border-box;background:#a8a8a8;"></div>
<div style="position:absolute;left:742px;top:244px;width:1px;height:1px;box-sizing:border-box;background:#b8b8b8;"></div>
<div style="position:absolute;left:743px;top:244px;width:1px;height:1px;box-sizing:border-box;background:#fdfdfd;"></div>
<div style="position:absolute;left:746px;top:243px;width:2px;height:1px;box-sizing:border-box;background:#a8a8a8;"></div>
<div style="position:absolute;left:746px;top:244px;width:1px;height:1px;box-sizing:border-box;background:#b8b8b8;"></div>
<div style="position:absolute;left:747px;top:244px;width:1px;height:1px;box-sizing:border-box;background:#fdfdfd;"></div>
<div style="position:absolute;left:738px;top:247px;width:2px;height:1px;box-sizing:border-box;background:#a8a8a8;"></div>
<div style="position:absolute;left:738px;top:248px;width:1px;height:1px;box-sizing:border-box;background:#b8b8b8;"></div>
<div style="position:absolute;left:739px;top:248px;width:1px;height:1px;box-sizing:border-box;background:#fdfdfd;"></div>
<div style="position:absolute;left:742px;top:247px;width:2px;height:1px;box-sizing:border-box;background:#a8a8a8;"></div>
<div style="position:absolute;left:742px;top:248px;width:1px;height:1px;box-sizing:border-box;background:#b8b8b8;"></div>
<div style="position:absolute;left:743px;top:248px;width:1px;height:1px;box-sizing:border-box;background:#fdfdfd;"></div>
<div style="position:absolute;left:746px;top:247px;width:2px;height:1px;box-sizing:border-box;background:#a8a8a8;"></div>
<div style="position:absolute;left:746px;top:248px;width:1px;height:1px;box-sizing:border-box;background:#b8b8b8;"></div>
<div style="position:absolute;left:747px;top:248px;width:1px;height:1px;box-sizing:border-box;background:#fdfdfd;"></div>
<div style="position:absolute;left:735px;top:552px;width:16px;height:16px;box-sizing:border-box;border:1px solid #8c8c8c;border-radius:3px;background:linear-gradient(#fdfdfd,#e2e2e2);"></div><svg style="position:absolute;left:739px;top:557px" width="7" height="4"><path d="M0 4 H7 L3.5 0 Z" fill="#000"/></svg>
<div style="position:absolute;left:735px;top:567px;width:16px;height:17px;box-sizing:border-box;border:1px solid #8c8c8c;border-radius:3px;background:linear-gradient(#fdfdfd,#e2e2e2);"></div><svg style="position:absolute;left:739px;top:573px" width="7" height="4"><path d="M0 0 H7 L3.5 4 Z" fill="#000"/></svg>
<div style="position:absolute;left:158px;top:590px;width:75px;height:23px;box-sizing:border-box;border:1px solid #777;border-radius:3px;background:linear-gradient(#f6f6f6,#dedede);"></div>
<div class="t" style="left:176.5px;top:596px;font-size:11px;">Style</div>
<svg style="position:absolute;left:222px;top:599px" width="6" height="3"><path d="M0 0 H6 L3.0 3 Z" fill="#000"/></svg>
<div style="position:absolute;left:421px;top:590px;width:75px;height:23px;box-sizing:border-box;border:1px solid #adadad;border-radius:3px;background:linear-gradient(#f6f6f6,#dedede);"></div><div class="t" style="left:421px;width:75px;text-align:center;top:596px;">OK</div>
<div style="position:absolute;left:506px;top:590px;width:75px;height:23px;box-sizing:border-box;border:1px solid #adadad;border-radius:3px;background:linear-gradient(#f6f6f6,#dedede);"></div><div class="t" style="left:506px;width:75px;text-align:center;top:596px;">Cancel</div>
<div style="position:absolute;left:591px;top:590px;width:75px;height:23px;box-sizing:border-box;border:1px solid #adadad;border-radius:3px;background:linear-gradient(#f6f6f6,#dedede);"></div><div class="t" style="left:591px;width:75px;text-align:center;top:596px;">Apply</div>
<div style="position:absolute;left:676px;top:590px;width:75px;height:23px;box-sizing:border-box;border:1px solid #adadad;border-radius:3px;background:linear-gradient(#f6f6f6,#dedede);"></div><div class="t" style="left:676px;width:75px;text-align:center;top:596px;">Help</div>
<svg style="position:absolute;left:652px;top:404px" width="22" height="20" viewBox="0 0 22 20"><path d="M6.8 8.5 L11.8 4 L11.8 13 Z" fill="#6db06d"/><path d="M11 8.5 H14.2 A3.2 3.2 0 0 1 14.2 14.9 H12.5" stroke="#6db06d" stroke-width="3" fill="none"/></svg>
<svg style="position:absolute;left:4px;top:34px" width="32" height="30" viewBox="0 0 32 30">
<path d="M4.8 4.5 L14.5 14.2" stroke="#d8d8d8" stroke-width="1.3" stroke-linecap="round"/>
<path d="M4 3.6 L6.2 5.8" stroke="#f0f0f0" stroke-width="2.4" stroke-linecap="round"/>
<path d="M14 15.5 L6 24" stroke="#1c355c" stroke-width="5" stroke-linecap="round"/>
<path d="M14 15.5 L6 24" stroke="#4a76b2" stroke-width="3.4" stroke-linecap="round"/>
<path d="M13 4.2 Q18.5 1.8 23 5.2 Q26.2 8 27 12.6 L25.2 14.2 Q24 10 21.5 8.6 Q19 7.2 17.5 7.4 Q15.5 5.4 13 4.2 Z" fill="#2a2a2a"/>
<path d="M17 9.5 L20.5 12.8" stroke="#ececec" stroke-width="3.2"/>
<path d="M16 14.5 L25.5 24.8" stroke="#6b3500" stroke-width="5" stroke-linecap="round"/>
<path d="M16 14.5 L25.5 24.8" stroke="#f28220" stroke-width="3.4" stroke-linecap="round"/>
</svg>
<svg style="position:absolute;left:6px;top:70px" width="32" height="30" viewBox="0 0 32 30">
<path d="M7 7 L20.5 10.3 L19 13.2 L5.9 11.3 Z" fill="#c6da82"/>
<path d="M5.9 11.3 L19 13.2 L15 17.2 L5.1 15.8 Z" fill="#70abe4"/>
<path d="M5.1 15.8 L15 17.2 L18.3 24 L4.6 19.6 Z" fill="#c64f77"/>
<path d="M21.7 14.1 L27.9 7.1" stroke="#aaa282" stroke-width="3.4" stroke-linecap="round"/>
<path d="M15.8 12.1 L23.6 18.3 L17.8 23.8 L12.3 17.6 Z" fill="#b8b090" stroke="#8e8868" stroke-width="0.8" stroke-linejoin="round"/>
</svg>
<svg style="position:absolute;left:6px;top:106px" width="28" height="25" viewBox="0 0 28 25">
<defs><linearGradient id="tg" x1="0" y1="0" x2="1" y2="1"><stop offset="0" stop-color="#3e66aa"/><stop offset="0.4" stop-color="#b4c3da"/><stop offset="1" stop-color="#f0f0f0"/></linearGradient></defs>
<rect x="1" y="1.4" width="2" height="15" fill="#ededed"/>
<rect x="4" y="2.3" width="21.7" height="14.7" fill="url(#tg)"/>
<path d="M8 8 Q10 6.5 12 8 L11.5 12 Q9.5 13 8.5 11 Z M14.5 5.5 Q19 4 23 6 L22 8.5 Q19 8 17.5 9.5 L17 13 Q15.5 12 15 9 Z" fill="#8a9ab0" opacity="0.55"/>
<rect x="3" y="18.8" width="23" height="1.8" fill="#3a3a3a"/>
<path d="M6 19.7 H26" stroke="#6a6a6a" stroke-width="0.8" stroke-dasharray="1 1"/>
<rect x="3" y="18.6" width="3.5" height="2.4" fill="#2a4678"/>
<rect x="1" y="21.8" width="25" height="1.2" fill="#eeeeee"/>
</svg>
<svg style="position:absolute;left:4px;top:138px" width="32" height="24" viewBox="0 0 32 24">
<path d="M5 8.5 L24 8.5 L27.3 21 L2.6 21 Z" fill="#e6e6e6" stroke="#3a3a3a" stroke-width="0.7"/>
<rect x="7.8" y="8.2" width="13.4" height="6.2" fill="#eeeeee" stroke="#4a4a4a" stroke-width="0.8"/>
<path d="M12 8.2 L12.4 5 Q14.7 3.6 17 5 L17.4 8.2 Z" fill="#f4f4f4" stroke="#4a4a4a" stroke-width="0.6"/>
<path d="M10 17 l1 2 M15 16.5 l0.5 2 M21 17 l1 1.5 M12 10.5 h2 M16 11 h2" stroke="#a8a8a8" stroke-width="1"/>
</svg>
<svg style="position:absolute;left:6px;top:175px" width="28" height="18" viewBox="0 0 28 18">
<rect x="1" y="0.6" width="2" height="15.4" fill="#ececec"/>
<rect x="3.6" y="2" width="22.2" height="14" fill="#f2f2f0"/>
<rect x="3.6" y="14" width="22.2" height="2" fill="#cfcfcf"/>
<path d="M5.3 3 V14.5" stroke="#505050" stroke-width="1"/>
<path d="M5.5 9.3 L9.3 6.3 L16.3 11.5 L19.6 8.7 L23.4 11.5" stroke="#4a5060" stroke-width="1" fill="none"/>
</svg>
<svg style="position:absolute;left:6px;top:206px" width="26" height="26" viewBox="0 0 26 26">
<circle cx="13" cy="12.8" r="11.2" fill="#6e9dd2" stroke="#3a5f8e" stroke-width="1"/>
<path d="M3.3 14.5 Q2.8 6 11.5 2.6 Q6 6.5 4.5 14.5 Z" fill="#cfe0f5"/>
<rect x="11.6" y="3.6" width="2.8" height="2.8" fill="#fff" stroke="#3a5f8e" stroke-width="0.5"/>
<rect x="11.7" y="8.3" width="2.6" height="14" fill="#fff" stroke="#3a5f8e" stroke-width="0.5"/>
</svg>
<svg style="position:absolute;left:9px;top:6px" width="18" height="19" viewBox="0 0 18 19">
<ellipse cx="8.5" cy="10.9" rx="5.1" ry="6.2" fill="none" stroke="#c9d178" stroke-width="3.4"/>
<ellipse cx="8.5" cy="10.9" rx="5.1" ry="6.2" fill="none" stroke="#e8ee9c" stroke-width="2.4"/>
<path d="M10.5 16 L13.5 17.8" stroke="#d9e08a" stroke-width="1.8"/>
<path d="M4.8 15.2 L13 5" stroke="#1f7a1f" stroke-width="1.9"/>
<path d="M11 4.6 L15 2.2 L13.8 7 Z" fill="#2a8c2a"/>
<path d="M2.6 15.5 L6.3 14.4 L5.8 17.6 Z" fill="#1c2e1c"/>
</svg>
</body></html>
